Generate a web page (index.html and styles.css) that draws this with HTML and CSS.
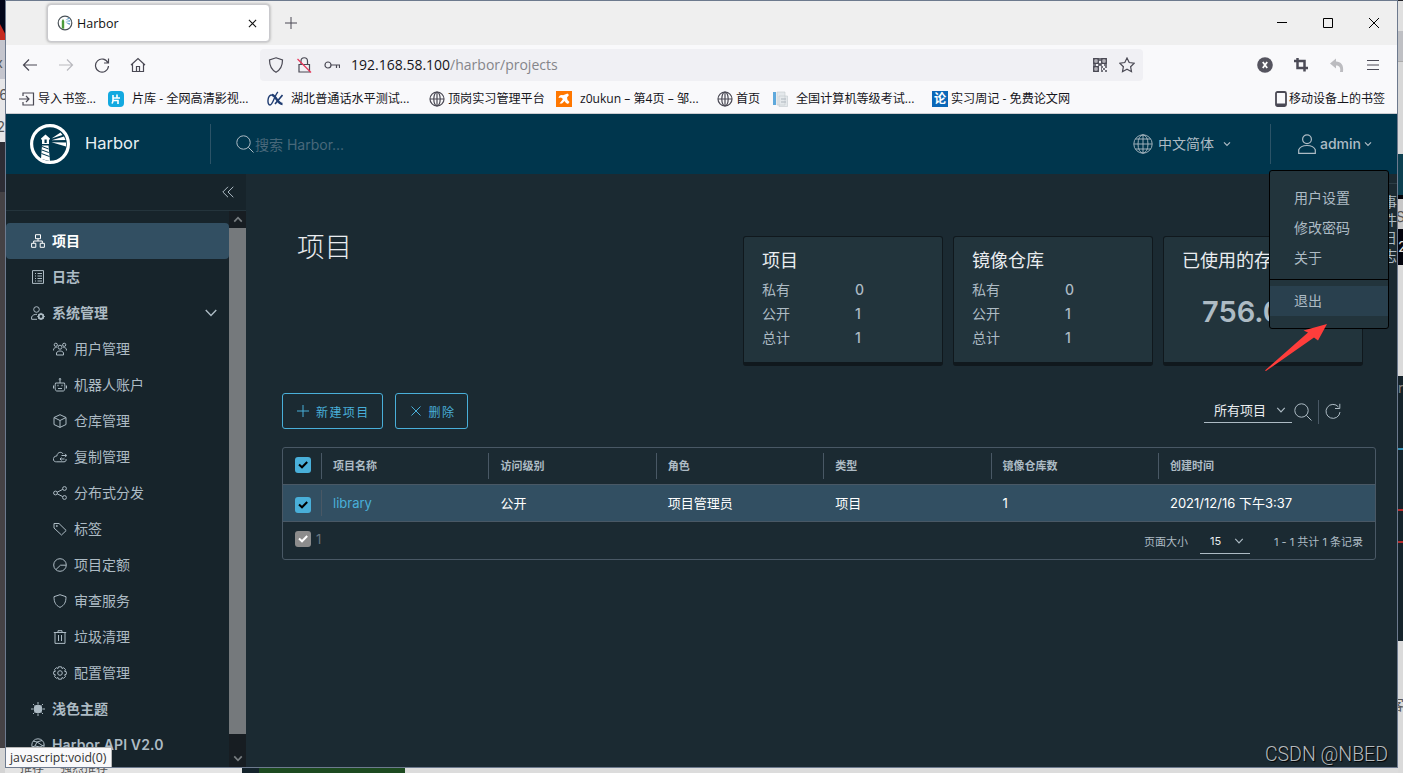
FILE: index.html
```html
<!DOCTYPE html>
<html lang="zh-CN">
<head>
    <meta charset="UTF-8">
    <meta name="viewport" content="width=device-width, initial-scale=1.0">
    <title>Harbor</title>
    <link rel="stylesheet" href="styles.css">
</head>
<body>
    <!-- 共用图标 -->
    <svg class="sprite" aria-hidden="true">
        <symbol id="chevron" viewBox="0 0 12 12"><path d="M1.5 3.5 6 8.2l4.5-4.7"/></symbol>
        <symbol id="search" viewBox="0 0 18 18"><circle cx="7.5" cy="7.5" r="6.7"/><path d="m12.3 12.3 5.2 5.2"/></symbol>
        <symbol id="globe" viewBox="0 0 16 16"><circle cx="8" cy="8" r="7"/><ellipse cx="8" cy="8" rx="3.2" ry="7"/><path d="M1 8h14M8 1v14"/></symbol>
        <symbol id="check" viewBox="0 0 16 16"><path d="m4 7.5 3 2.8L12.2 5"/></symbol>
    </svg>

    <div class="desktop">
        <div class="edge-left"><span class="edge-red"></span><span class="edge-a">x</span><span class="edge-b">6</span><span class="edge-c">2</span></div>
        <div class="edge-right"><span class="edge-d">S</span><span class="edge-e">2</span><span class="edge-f">r</span><span class="edge-g">客</span></div>
        <div class="edge-bottom"><span>推荐</span><span>强烈推荐</span></div>
    </div>

    <div class="window">
        <!-- 标签栏 -->
        <div class="titlebar">
            <div class="tab">
                <svg class="i16" viewBox="0 0 16 16"><circle cx="8" cy="8" r="6.8" fill="#fff" stroke="#4a5258" stroke-width="1.2"/><g stroke="none"><path d="M4.800 13.500V6l1.200-2L7.200 6v7.800z" fill="#4b9b3a"/><path d="m8.300 5.200 3.500-2.700 1 1.300zM8.300 6.200l5-1.200v1.800zM8.300 7.200l5 1-.8 1.800z" fill="#6ba3cc"/></g></svg>
                <span>Harbor</span>
                <svg class="i10" viewBox="0 0 10 10"><path d="m1 1 8 8M9 1 1 9"/></svg>
            </div>
            <svg class="new-tab" viewBox="0 0 12 12"><path d="M6 0v12M0 6h12"/></svg>
            <div class="controls">
                <svg viewBox="0 0 10 10"><path d="M0 4.500h10"/></svg>
                <svg viewBox="0 0 10 10"><path d="M.5.5h9v9h-9z"/></svg>
                <svg viewBox="0 0 10 10"><path d="m0 0 10 10M10 0 0 10"/></svg>
            </div>
        </div>

        <!-- 地址栏 -->
        <div class="navbar">
            <div class="nav-buttons">
                <svg class="i16" viewBox="0 0 16 16"><path d="M15 8H1.500M7 2.500 1.500 8 7 13.500"/></svg>
                <svg class="i16 off" viewBox="0 0 16 16"><path d="M1 8h13.500M9 2.500 14.500 8 9 13.500"/></svg>
                <svg class="i16" viewBox="0 0 16 16"><path d="M14 6A6.500 6.500 0 1 0 14.500 9M14.500 1.500V6H10"/></svg>
                <svg class="i16" viewBox="0 0 16 16"><path d="M1 8 8 1.500 15 8M2.500 7v7.500h11V7M6.500 14v-4.500h3V14"/></svg>
            </div>
            <div class="urlbar">
                <svg class="i16" viewBox="0 0 16 16"><path d="M8 .8 14.500 3c0 6-1.500 9.500-6.500 12.200C3 12.500 1.500 9 1.500 3z"/></svg>
                <svg class="i16" viewBox="0 0 16 16"><path d="M3 7.500h10.500V15H3zM5 7V4a3.200 3.200 0 0 1 6.500 0v3"/><path class="slash" d="M1.500 2 15 15.500"/></svg>
                <svg class="i16" viewBox="0 0 16 16"><circle cx="4" cy="8" r="3"/><path d="M7 8h8.500v3M12.500 8v3"/></svg>
                <p>192.168.58.100<span>/harbor/projects</span></p>
                <svg class="qr" viewBox="0 0 14 14"><path d="M.8.8h4.400v4.400H.8zM8.800.8h4.400v4.400H8.800zM.8 8.800h4.400v4.400H.8z"/><path class="dots" d="M2.500 3h1M10.500 3h1M2.500 11h1M7 0v3M7 5v2M0 7h3M5 7h4M11 7h3M8 9h2M12 9h2M10 11h2M8 13h2M12 13h2M8 11h1"/></svg>
                <svg class="i16" viewBox="0 0 16 16"><path d="m8 1 2.200 4.500 5 .7-3.600 3.500.9 5L8 12.300 3.500 14.700l.9-5L.8 6.200l5-.7z"/></svg>
            </div>
            <div class="nav-tools">
                <svg class="i16" viewBox="0 0 16 16"><circle cx="8" cy="8" r="7.800" class="dark"/><path d="m5.800 5 4.400 6M10.200 5l-4.400 6" class="light"/></svg>
                <svg class="i16" viewBox="0 0 16 16"><path class="bold" d="M1 4h10.500v10.500M4.500 1v10H15"/></svg>
                <svg class="i16 undo" viewBox="0 0 16 16"><path d="M1 6.500 7 1.500v3c5 0 8 3.500 7 10.500h-3c1-4-.5-6.500-4-6.500v3z"/></svg>
                <svg class="i16" viewBox="0 0 16 16"><path d="M2 3.500h12M2 8h12M2 12.500h12"/></svg>
            </div>
        </div>

        <!-- 书签栏 -->
        <div class="bookmarks">
            <div class="bookmark"><svg class="i16" viewBox="0 0 16 16"><path d="M4 5V2h10.500v12H4v-3M0 8h10M7 5l3 3-3 3"/></svg>导入书签...</div>
            <div class="bookmark wide"><svg class="i16" viewBox="0 0 16 16"><rect width="16" height="16" rx="4" fill="#13a9e0" stroke="none"/><path stroke="#fff" stroke-width="1.600" d="M5 4v5c0 2-.5 2.500-1 3.500M5 7h7M9 3.500V7M5 9.500h5V13"/></svg>片库 - 全网高清影视...</div>
            <div class="bookmark wide"><svg class="i16" viewBox="0 0 16 16"><path stroke="#203d72" stroke-width="1.400" d="M11 1C8 3 6 14 3 14S0 4 5 4"/><path stroke="#203d72" stroke-width="2.400" d="M5 4c4 0 5 9 10.500 9"/><path stroke="#203d72" stroke-width="1.600" d="M15.500 4 8 13"/></svg>湖北普通话水平测试...</div>
            <div class="bookmark"><svg class="i16"><use href="#globe"/></svg>顶岗实习管理平台</div>
            <div class="bookmark wide"><svg class="i16" viewBox="0 0 16 16"><path fill="#f70" stroke="none" d="M0 0h16v16H0z"/><path fill="#fff" stroke="none" d="M2.500 7C3 4 5 3.500 7 4.200L11.500 2.500 13 4l-2 2.500.5 2.500 2 2-1.500 2-2-1-1.500-2-2.500 2.500H3.500L7 8 5 6.500z"/></svg>z0ukun – 第4页 – 邹...</div>
            <div class="bookmark"><svg class="i16"><use href="#globe"/></svg>首页</div>
            <div class="bookmark wide"><svg class="i16" viewBox="0 0 16 16"><path fill="#5fa9dc" stroke="none" d="M1 1h3v13H1z"/><path fill="#e4e8eb" stroke="#c3c9cf" stroke-width=".6" d="M5 1h8v13H5zM7 5h8.500v10.500H7z"/><path stroke="#aeb6bd" d="M9 8h5M9 11h5"/></svg>全国计算机等级考试...</div>
            <div class="bookmark"><span class="lun">论</span>实习周记 - 免费论文网</div>
            <div class="bookmark mobile"><svg viewBox="0 0 12 16"><rect x="1" y="1" width="10" height="14" rx="1.500" stroke-width="1.800"/><path d="M1 13.500h10" stroke-width="2"/></svg>移动设备上的书签</div>
        </div>

        <!-- Harbor 页头 -->
        <header class="header">
            <div class="brand">
                <svg viewBox="0 0 40 40"><circle cx="20" cy="20" r="18.400" fill="none" stroke="#fff" stroke-width="3.200"/><path fill="#fff" d="M15.500 10.500 11 14.500v1h1V20h7v-4.500h1v-1zM12 21.500h6.500L20 37l-9-2z"/><path fill="#00364d" d="M14.500 15.500h2.200V19h-2.200z"/><path stroke="#00364d" stroke-width="1" d="m12 22.500 6.500 2.500M11.800 26l7 2.500M11.500 29.500l8 3"/><path fill="#fff" d="m21.500 14.500 9-6 2 2.500zM21.500 16.200l12.500-3.700 1.500 3.500zM21.500 18.200l14.500.3v4z"/></svg>
                <span>Harbor</span>
            </div>
            <div class="search"><svg><use href="#search"/></svg><span>搜索 Harbor...</span></div>
            <div class="language"><svg class="globe" viewBox="0 0 20 20"><circle cx="10" cy="10" r="9.200"/><ellipse cx="10" cy="10" rx="5" ry="9.200"/><path d="M1 10h18M10 1v18M2.500 5h15M2.500 15h15"/></svg><span>中文简体</span><svg class="chev"><use href="#chevron"/></svg></div>
            <div class="account"><svg class="user" viewBox="0 0 18 20"><circle cx="9" cy="5.200" r="4.400"/><path d="M.7 19.300v-3.500C2 12.500 5 11.500 9 11.500s7 1 8.300 4.300v3.500z"/></svg><span>admin</span><svg class="chev"><use href="#chevron"/></svg></div>
        </header>

        <div class="page">
            <nav class="sidebar">
                <div class="collapse"><svg viewBox="0 0 12 12"><path d="M6 .8.8 6 6 11.200M11.300.8 6 6l5.300 5.200"/></svg></div>
                <div class="scroll-area">
                    <ul class="menu">
                        <li class="active"><svg viewBox="0 0 14 14"><path d="M4.500.7h5v4h-5zM.6 9.300h4.200v4H.6zM9.200 9.300h4.200v4H9.200zM7 4.700V7M2.700 9V7h8.600v2"/></svg><span>项目</span></li>
                        <li><svg viewBox="0 0 14 14"><path d="M1.500.6h11v12.800h-11zM4 3.500h1M6.500 3.500H11M4 6h1M6.500 6H11M4 8.500h1M6.500 8.500H11M4 11h1M6.500 11H11"/></svg><span>日志</span></li>
                        <li><svg viewBox="0 0 14 14"><circle cx="5.500" cy="3.500" r="2.800"/><path d="M6 13.300H.6V11C1.500 9 3.500 8.300 6 8.300"/><circle cx="10" cy="10.500" r="2.300" stroke-width="1.800"/><path d="M10 6.800v1.400M10 12.800v1.400M6.300 10.500h1.400M12.300 10.500h1.500M7.500 8l1 1M12.500 8l-1 1M7.500 13l1-1M12.500 13l-1-1"/></svg><span>系统管理</span><svg class="fold"><use href="#chevron"/></svg></li>
                        <li class="sub"><svg viewBox="0 0 14 14"><circle cx="7" cy="5.200" r="2"/><circle cx="2.800" cy="2.800" r="1.600"/><circle cx="11.200" cy="2.800" r="1.600"/><path d="M3.500 13v-2c.5-1.500 1.800-2 3.500-2s3 .5 3.500 2v2zM.6 8.500V7c.5-1 1.400-1.500 3-1.500M13.400 8.500V7c-.5-1-1.400-1.500-3-1.500"/></svg><span>用户管理</span></li>
                        <li class="sub"><svg viewBox="0 0 14 14"><path d="M2.500 5h9c1 5 0 8-1 8h-7c-1 0-2-3-1-8zM7 5V2M.5 7.500v3M13.500 7.500v3M5 10.500h4"/><circle cx="7" cy="1.200" r=".8"/><path d="M4.500 7.500h1M8.500 7.500h1" stroke-width="1.500"/></svg><span>机器人账户</span></li>
                        <li class="sub"><svg viewBox="0 0 14 14"><path d="m7 .7 6 2.800v7L7 13.400 1 10.500v-7zM1 3.500l6 3 6-3M7 6.500v7"/></svg><span>仓库管理</span></li>
                        <li class="sub"><svg viewBox="0 0 14 14"><path d="M10 4C9 1.500 4.500 1.500 3.800 6 1.500 6-.3 8 .5 10c.5 1.500 1.500 1.800 3 1.800h7.500c1.500 0 2.500-1 2-2.800M8.500 5.500h5M12 3.800l1.700 1.700L12 7.200M11.500 9H7M8.500 7.500 7 9l1.500 1.500"/></svg><span>复制管理</span></li>
                        <li class="sub"><svg viewBox="0 0 14 14"><circle cx="11.500" cy="2.500" r="1.900"/><circle cx="2.500" cy="7" r="1.900"/><circle cx="11.500" cy="11.500" r="1.900"/><path d="m4.200 6.200 5.500-2.800M4.200 7.800l5.500 2.800"/></svg><span>分布式分发</span></li>
                        <li class="sub"><svg viewBox="0 0 14 14"><path d="M1 1.500h5l7.200 7L8.500 13 1 6z"/><circle cx="3.800" cy="4" r=".6"/></svg><span>标签</span></li>
                        <li class="sub"><svg viewBox="0 0 14 14"><circle cx="7" cy="7" r="6.300"/><path d="M13 7.200H7.500L3 11.500"/></svg><span>项目定额</span></li>
                        <li class="sub"><svg viewBox="0 0 14 14"><path d="m7 .7 6 2c0 5.500-1.500 8.500-6 10.700C2.500 11.200 1 8.200 1 2.700z"/></svg><span>审查服务</span></li>
                        <li class="sub"><svg viewBox="0 0 14 14"><path d="M.8 2.500h12.400M5 2.500V.7h4v1.800M2 2.500v10.900h10V2.500M5.500 5v6M8.500 5v6"/></svg><span>垃圾清理</span></li>
                        <li class="sub"><svg viewBox="0 0 14 14"><circle cx="7" cy="7" r="2.300"/><path d="M5.500.8h3l.5 1.700 1.700-.8 1.800 1.900-.9 1.700 1.700.4v2.600l-1.700.5.9 1.700-1.900 1.800-1.600-.8-.5 1.700h-3L5 11.500l-1.600.8-1.900-1.800.9-1.700-1.700-.5V5.700l1.700-.4-.9-1.700 1.900-1.900 1.600.8z"/></svg><span>配置管理</span></li>
                        <li><svg viewBox="0 0 14 14"><circle cx="7" cy="7" r="4" fill="#adbbc4"/><path d="M7 0v2M7 12v2M0 7h2M12 7h2M2 2l1.500 1.500M12 2l-1.500 1.500M2 12l1.500-1.500M12 12l-1.500-1.500"/></svg><span>浅色主题</span></li>
                        <li><svg viewBox="0 0 14 14"><circle cx="7" cy="7" r="6.200"/><path d="m2 3 4 1 5-1.500M6 4 4 8l-3 1M4 8l5 1 4-2M9 9l-1 4M6 4l6 4"/></svg><span class="api">Harbor API V2.0</span></li>
                    </ul>
                    <div class="scrollbar"><svg class="up"><use href="#chevron"/></svg><div class="thumb"></div><svg><use href="#chevron"/></svg></div>
                </div>
            </nav>

            <main class="content">
                <section class="summary">
                    <h1>项目</h1>
                    <div class="card"><h2>项目</h2><dl><dt>私有</dt><dd>0</dd><dt>公开</dt><dd>1</dd><dt>总计</dt><dd>1</dd></dl></div>
                    <div class="card"><h2>镜像仓库</h2><dl><dt>私有</dt><dd>0</dd><dt>公开</dt><dd>1</dd><dt>总计</dt><dd>1</dd></dl></div>
                    <div class="card"><h2>已使用的存储</h2><div class="quota">756.06</div></div>
                </section>

                <section class="toolbar">
                    <button class="btn"><svg viewBox="0 0 12 12"><path d="M6 0v12M0 6h12"/></svg>新建项目</button>
                    <button class="btn"><svg viewBox="0 0 12 12"><path d="m1.500 1.500 9 9M10.500 1.500l-9 9"/></svg>删除</button>
                    <div class="filter">
                        <div class="select">所有项目<svg class="chev"><use href="#chevron"/></svg></div>
                        <svg class="find"><use href="#search"/></svg>
                        <div class="refresh"><svg viewBox="0 0 16 16"><path d="M13.500 4A7 7 0 1 0 15 9M14.800.8v4.700H10"/></svg></div>
                    </div>
                </section>

                <section class="datagrid">
                    <div class="row head">
                        <div><span class="box"><svg><use href="#check"/></svg></span></div>
                        <div>项目名称</div><div>访问级别</div><div>角色</div><div>类型</div><div>镜像仓库数</div><div>创建时间</div>
                    </div>
                    <div class="row selected">
                        <div><span class="box"><svg><use href="#check"/></svg></span></div>
                        <div><a>library</a></div><div>公开</div><div>项目管理员</div><div>项目</div><div>1</div><div>2021/12/16 下午3:37</div>
                    </div>
                    <div class="foot">
                        <span class="box gray"><svg><use href="#check"/></svg></span><span class="count">1</span>
                        <span class="size-label">页面大小</span>
                        <span class="page-size">15<svg class="chev"><use href="#chevron"/></svg></span>
                        <span class="total">1 - 1 共计 1 条记录</span>
                    </div>
                </section>
                <aside class="event-tab">事件日志</aside>
            </main>
        </div>

        <div class="dropdown">
            <a>用户设置</a>
            <a>修改密码</a>
            <a>关于</a>
            <hr>
            <a class="hover">退出</a>
        </div>
        <svg class="arrow" viewBox="0 0 64 48"><path fill="#ff3d3b" d="M0 46.500 43 8.500 38.500 6.500 62 0 53 16.500 49 13.500 1 47z"/></svg>
        <div class="status">javascript:void(0)</div>
        <div class="watermark">CSDN @NBED</div>
    </div>
</body>
</html>
```
FILE: styles.css
```css
:root {
    --page-bg: #1b2a32;
    --side-bg: #17242b;
    --card-bg: #22343c;
    --text: #adbbc4;
    --accent: #49afd9;
    --line: #495865;
    --selected: #324f62;
}

* {
    box-sizing: border-box;
    margin: 0;
    padding: 0;
}

body {
    position: relative;
    width: 1403px;
    height: 773px;
    padding-left: 5px;
    overflow: hidden;
    font-family: Inter, "Noto Sans CJK SC", sans-serif;
    font-size: 14px;
    color: var(--text);
    background: #d9d9d9;
}

svg {
    flex: none;
    fill: none;
    stroke: currentColor;
}

.sprite {
    position: absolute;
    width: 0;
    height: 0;
}

/* slivers of the windows behind the browser */
.desktop > div {
    position: absolute;
    overflow: hidden;
    color: #555;
    font-size: 14px;
}

.desktop span {
    position: absolute;
}

.edge-left {
    left: 0;
    top: 0;
    width: 5px;
    height: 773px;
    background: linear-gradient(#02061a 40px, #c4c5cd 40px 79px, #e6e6e8 79px 142px, #2d2d35 142px 192px, #454245 192px 748px, #d4d4d4 748px);
}

.edge-left .edge-red {
    top: 24px;
    width: 5px;
    height: 16px;
    background: #c52a20;
    clip-path: polygon(0 0, 100% 60%, 100% 100%, 0 100%);
}

.edge-a { top: 54px; right: 2px; }
.edge-b { top: 86px; right: -3px; }
.edge-c { top: 118px; right: 0; }

.edge-right {
    right: 0;
    top: 0;
    width: 5px;
    height: 773px;
    background: linear-gradient(#24252b 1px, #e0e0e0 1px 31px, #bfc0c4 31px 61px, #aaa 61px 62px, #d8d8d8 62px 154px, #0d4051 154px 195px, #030309 195px 199px, #c8c8c8 199px 229px, #03040d 229px 265px, #dadada 265px 376px, #15232b 376px 448px, #358fb3 448px 450px, #15232b 450px 509px, #b52c2c 509px 511px, #15232b 511px 541px, #b52c2c 541px 543px, #15232b 543px 641px, #dadada 641px);
}

.edge-d { top: 208px; left: -2px; }
.edge-e { top: 238px; left: 0; color: #ddd; }
.edge-f { top: 379px; left: 0; color: #888; }
.edge-g { top: 694px; left: -8px; }

.edge-bottom {
    left: 5px;
    bottom: 0;
    width: 1393px;
    height: 5px;
    background: linear-gradient(90deg, #e4e4e4 237px, #14232b 237px 254px, #1d4a20 254px 400px, #dcdcdc 400px);
}

.edge-bottom span {
    bottom: -2px;
    left: 15px;
    font-size: 12px;
    line-height: 14px;
}

.edge-bottom span + span {
    left: 55px;
}

.window {
    position: relative;
    display: flex;
    flex-direction: column;
    width: 1393px;
    height: 768px;
    border: 1px solid #6d7a8e;
    overflow: hidden;
    background: var(--page-bg);
}

/* browser chrome */
.titlebar,
.navbar,
.bookmarks {
    display: flex;
    align-items: center;
    color: #4a4954;
    font-family: "Open Sans", "Noto Sans CJK SC", sans-serif;
}

.i16 {
    width: 16px;
    height: 16px;
    stroke-width: 1.2;
}

.titlebar {
    flex: none;
    height: 44px;
    padding-left: 41px;
    background: #efefef;
}

.tab {
    display: flex;
    align-items: center;
    width: 223px;
    height: 38px;
    padding: 0 12px 0 9px;
    border: 1px solid #c9c9cd;
    border-radius: 4px;
    background: #fff;
    box-shadow: 0 0 3px rgba(0, 0, 0, .35);
    color: #111;
    font-size: 12.5px;
}

.tab span {
    flex: 1;
    margin-left: 4px;
}

.i10 {
    width: 9px;
    height: 9px;
    stroke-width: 1.2;
}

.new-tab {
    width: 12px;
    height: 12px;
    margin-left: 15px;
}

.controls {
    display: flex;
    gap: 36px;
    margin-left: auto;
    padding-right: 18px;
    color: #000;
}

.controls svg {
    width: 10px;
    height: 10px;
}

.navbar {
    flex: none;
    height: 40px;
    background: #f9f9fb;
}

.nav-buttons {
    display: flex;
    gap: 20px;
    width: 254px;
    padding-left: 16px;
}

.off {
    color: #b9b9be;
}

.urlbar {
    display: flex;
    align-items: center;
    gap: 12px;
    width: 883px;
    height: 32px;
    padding: 0 8px;
    border-radius: 4px;
    background: #f0f0f4;
}

.urlbar p {
    flex: 1;
    margin: -2px 0 0 -1px;
    color: #15141a;
    font-size: 14px;
}

.urlbar p span {
    color: #85858a;
}

.slash {
    stroke: #e8385c;
}

.qr {
    width: 14px;
    height: 14px;
    stroke-width: 1.5;
}

.nav-tools {
    display: flex;
    gap: 20px;
    margin-left: auto;
    padding-right: 16px;
    color: #4c4b57;
}

.dark {
    fill: #55545f;
    stroke: none;
}

.light {
    stroke: #fff;
    stroke-width: 1.8;
}

.bold {
    stroke-width: 2.5;
}

.undo path {
    fill: #bcbcc0;
    stroke: none;
}

.bookmarks {
    flex: none;
    display: grid;
    grid-template-columns: 89px 159px 162px 127px 161px 55px 160px 1fr auto;
    height: 29px;
    padding: 0 12px 0 13px;
    border-bottom: 1px solid #ccccd1;
    background: #f9f9fb;
}

.bookmark {
    display: flex;
    align-items: center;
    gap: 3px;
    color: #15141a;
    font-size: 12.1px;
    line-height: 18px;
    white-space: nowrap;
}

.bookmark svg {
    color: #4a4954;
}

.wide {
    gap: 8px;
}

.lun {
    width: 16px;
    height: 16px;
    background: #0b68b8;
    color: #fff;
    font-weight: 700;
    line-height: 15px;
    text-align: center;
}

.mobile {
    gap: 2px;
    font-size: 12px;
}

.mobile svg {
    width: 12px;
    height: 16px;
}

/* harbor header */
.header {
    flex: none;
    display: flex;
    align-items: center;
    height: 60px;
    background: #00364d;
}

.brand {
    display: flex;
    align-items: center;
    width: 205px;
    height: 40px;
    padding-left: 24px;
    border-right: 1px solid #2b5367;
    color: #e9f0f3;
    font-size: 16.5px;
}

.brand span {
    margin-top: -2px;
}

.brand svg {
    width: 40px;
    height: 40px;
    margin-right: 15px;
    stroke: none;
}

.search {
    display: flex;
    align-items: center;
    flex: 1;
    padding-left: 25px;
}

.search svg {
    width: 18px;
    height: 18px;
}

.search span {
    margin-left: 1px;
    color: #48687a;
}

.language {
    display: flex;
    align-items: center;
    width: 138px;
    height: 40px;
    border-right: 1px solid #2b5367;
}

.language span,
.account span {
    margin-top: -2px;
}

.globe {
    width: 20px;
    height: 20px;
    margin-right: 5px;
    stroke-width: .9;
}

.chev {
    width: 8px;
    height: 8px;
    stroke-width: 1.8;
}

.language .chev {
    margin-left: 9px;
}

.account {
    display: flex;
    align-items: center;
    width: 126px;
    padding-left: 27px;
    font-weight: 500;
}

.user {
    width: 18px;
    height: 20px;
    margin-right: 4px;
    stroke-width: 1.2;
}

.account .chev {
    margin-left: 3px;
}

.page {
    display: flex;
    flex: 1;
    min-height: 0;
}

/* sidebar */
.sidebar {
    display: flex;
    flex-direction: column;
    width: 240px;
    background: var(--side-bg);
}

.collapse {
    display: flex;
    align-items: center;
    justify-content: flex-end;
    flex: none;
    height: 37px;
    padding-right: 12px;
    border-bottom: 1px solid #24343c;
}

.collapse svg {
    width: 12px;
    height: 12px;
}

.scroll-area {
    display: flex;
    flex: 1;
    min-height: 0;
}

.menu {
    flex: 1;
    padding-top: 12px;
    overflow: hidden;
    list-style: none;
}

.menu li {
    display: flex;
    align-items: center;
    height: 36px;
    padding-left: 25px;
    font-weight: 600;
}

.menu li > svg:first-child {
    width: 14px;
    height: 14px;
    margin-right: 7px;
    stroke-width: 1;
}

.menu span {
    margin-top: -2px;
}

.menu .api {
    letter-spacing: .15px;
}

.menu .sub {
    padding-left: 47px;
    font-weight: 400;
}

.menu .active {
    border-radius: 4px;
    background: var(--selected);
    color: #fff;
}

.menu .fold {
    width: 14px;
    height: 14px;
    margin: 0 11px 0 auto;
    stroke-width: 1.2;
}

.scrollbar {
    display: flex;
    flex-direction: column;
    align-items: center;
    justify-content: space-between;
    width: 17px;
    background: #171d22;
    color: #777d80;
}

.scrollbar svg {
    width: 10px;
    height: 17px;
    stroke-width: 2;
}

.up {
    transform: rotate(180deg);
}

.thumb {
    flex: none;
    width: 17px;
    height: 506px;
    margin-bottom: 16px;
    background: #75797c;
}

/* content */
.content {
    position: relative;
    flex: 1;
    padding: 62px 21px 0 36px;
}

.summary {
    display: flex;
    gap: 10px;
    padding-right: 13px;
}

h1 {
    flex: 1;
    padding: 1px 0 0 15px;
    color: #eaedf0;
    font-size: 27.5px;
    font-weight: 300;
    line-height: 20px;
}

.card {
    width: 200px;
    height: 130px;
    padding: 12px 18px;
    border: 1px solid #10181d;
    border-bottom-width: 4px;
    border-radius: 3px;
    background: var(--card-bg);
}

h2 {
    color: #eaedf0;
    font-size: 18px;
    font-weight: 400;
    line-height: 24px;
    white-space: nowrap;
}

.card dl {
    display: grid;
    grid-template-columns: 93px 1fr;
    margin-top: 5px;
    line-height: 24px;
}

.card dd {
    font-weight: 500;
}

.quota {
    margin: 20px 0 0 20px;
    font-size: 29px;
    font-weight: 600;
    line-height: 38px;
}

.toolbar {
    display: flex;
    gap: 12px;
    margin-top: 27px;
}

.btn {
    display: flex;
    align-items: center;
    gap: 7px;
    height: 36px;
    padding: 0 12px 0 14px;
    border: 1px solid var(--accent);
    border-radius: 3px;
    background: none;
    color: var(--accent);
    font-family: inherit;
    font-size: 12px;
    letter-spacing: 1.4px;
}

.btn svg {
    width: 12px;
    height: 12px;
}

.filter {
    display: flex;
    align-items: center;
    height: 30px;
    margin: 0 34px 0 auto;
}

.select {
    display: flex;
    align-items: center;
    justify-content: space-between;
    width: 88px;
    height: 26px;
    margin-top: 4px;
    padding: 0 6px 0 10px;
    border-bottom: 1px solid var(--text);
    color: #eaedf0;
    font-size: 13px;
}

.select .chev,
.page-size .chev {
    width: 10px;
    height: 10px;
    color: var(--text);
    stroke-width: 1.4;
}

.find {
    width: 18px;
    height: 18px;
    margin: 7px 6px 0 2px;
}

.refresh {
    display: flex;
    align-items: center;
    height: 24px;
    margin-top: 7px;
    padding: 0 1px 2px 6px;
    border-left: 1px solid var(--line);
}

.refresh svg {
    width: 16px;
    height: 16px;
}

/* datagrid */
.datagrid {
    height: 113px;
    margin-top: 18px;
    border: 1px solid var(--line);
    border-radius: 3px;
}

.row {
    display: grid;
    grid-template-columns: 38px repeat(5, 167.4px) 1fr;
    align-items: center;
    height: 37px;
    border-bottom: 1px solid var(--line);
}

.row > div {
    height: 26px;
    padding-left: 11px;
    border-left: 1px solid var(--line);
    line-height: 26px;
}

.row > div:first-child {
    display: flex;
    align-items: center;
    padding-left: 12px;
    border: none;
}

.head {
    font-size: 11px;
    font-weight: 600;
}

.selected {
    background: var(--selected);
    color: #fff;
    font-size: 13px;
}

.selected > div {
    border-color: transparent;
}

.selected > div:nth-child(2) {
    border-color: var(--line);
}

.selected a {
    color: var(--accent);
}

.box {
    width: 16px;
    height: 16px;
    border-radius: 3px;
    background: var(--accent);
    color: #000;
}

.head .box {
    margin-top: -2px;
}

.selected .box {
    margin-top: 3px;
}

.box svg {
    display: block;
    width: 16px;
    height: 16px;
    stroke-width: 2;
}

.gray {
    background: #8c8c8c;
    color: #fff;
}

.foot {
    display: flex;
    align-items: center;
    height: 37px;
    padding: 0 12px;
    font-size: 11px;
}

.foot .gray {
    margin-top: -4px;
}

.count {
    flex: 1;
    margin: -3px 0 0 5px;
    color: #66757f;
    font-size: 13px;
}

.page-size {
    display: flex;
    align-items: center;
    justify-content: space-between;
    width: 50px;
    height: 24px;
    margin: 2px 24px 0 12px;
    padding: 0 6px 0 10px;
    border-bottom: 1px solid var(--text);
    color: #eaedf0;
}

.event-tab {
    position: absolute;
    top: 9px;
    right: 0;
    width: 14px;
    height: 87px;
    padding-top: 9px;
    border-top: 1px solid #2d3e47;
    font-size: 14px;
    line-height: 18px;
    word-break: break-all;
}

/* overlays */
.dropdown {
    position: absolute;
    top: 169px;
    left: 1263px;
    width: 120px;
    height: 159px;
    padding-top: 12px;
    border: 1px solid #000;
    border-radius: 3px;
    background: var(--card-bg);
}

.dropdown a {
    display: block;
    height: 30px;
    padding-left: 24px;
    line-height: 30px;
}

.dropdown hr {
    margin: 6px 0;
    border: none;
    border-top: 1px solid #000;
}

.dropdown .hover {
    background: #29404e;
}

.arrow {
    position: absolute;
    top: 323px;
    left: 1259px;
    width: 64px;
    height: 48px;
    stroke: none;
}

.status {
    position: absolute;
    left: 0;
    bottom: 0;
    width: 106px;
    height: 20px;
    padding-left: 4px;
    border-top: 1px solid #b8b8b8;
    border-right: 1px solid #b8b8b8;
    background: #f9f9fb;
    color: #333;
    font: 12.3px/19px "Open Sans", sans-serif;
}

.watermark {
    position: absolute;
    right: 9px;
    bottom: 1px;
    color: #b5babd;
    font: 300 19.5px/22px Roboto, sans-serif;
    text-shadow: 1px 1px 1px #000;
}
```
